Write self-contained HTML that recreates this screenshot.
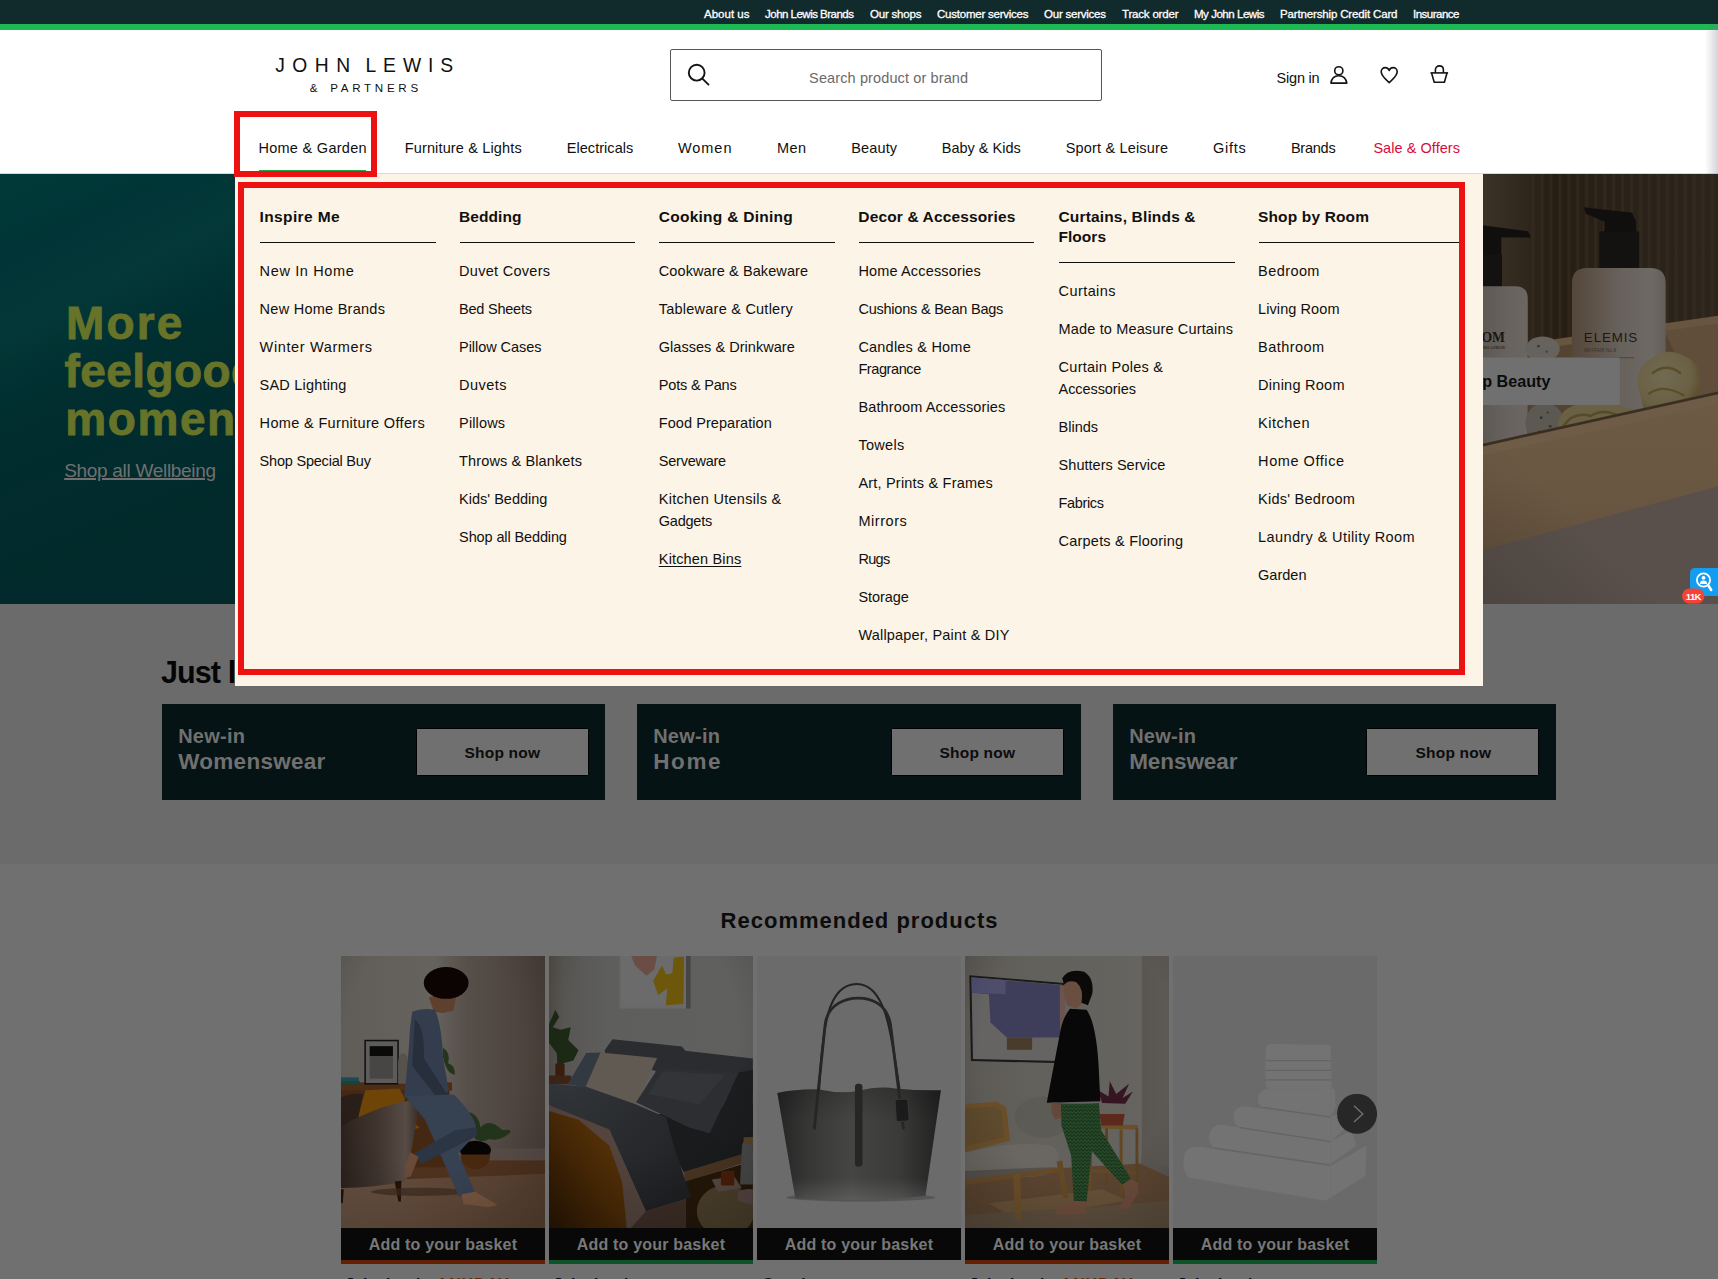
<!DOCTYPE html>
<html lang="en">
<head>
<meta charset="utf-8">
<title>John Lewis &amp; Partners | Homeware, Fashion, Electricals &amp; More</title>
<style>
html,body{margin:0;padding:0}
body{width:1718px;height:1279px;overflow:hidden;position:relative;background:#707070;font-family:"Liberation Sans",sans-serif;color:#101010}
.abs,.t,.rule,svg{position:absolute}
.t{white-space:nowrap;display:block}
.rule{width:175.5px;height:1.5px;background:#101010}
#topbar{left:0;top:0;width:1718px;height:24px;background:#112b2c}
#greenbar{left:0;top:24px;width:1718px;height:6px;background:#1db954}
#header{left:0;top:30px;width:1718px;height:143px;background:#fff}
#hline{left:0;top:173px;width:1718px;height:1px;background:#d9d9d9}
#search{left:670px;top:49px;width:430px;height:50px;border:1px solid #555;border-radius:2px;background:#fff}
#hero{left:0;top:174px;width:1718px;height:430px;background:#022e2f;overflow:hidden}
#sec1{left:0;top:604px;width:1718px;height:260px;background:#6b6b6b}
#sec2{left:0;top:864px;width:1718px;height:415px;background:#707070}
#menu{left:235px;top:174px;width:1248px;height:512px;background:#fcf4e6}
.red{border:6px solid #ed1212;box-sizing:border-box}
.card{top:704px;width:443px;height:96px;background:#061314}
.btn{top:728px;width:170.6px;height:45.6px;background:#707070;border:1px solid #000;border-radius:1.5px}
.bar{top:1228px;width:204px;height:32px;background:#080808}
.stripe{top:1260px;width:204px;height:4px}
.pimg{top:956px;width:204px;height:272px;overflow:hidden}
</style>
</head>
<body>
<div class="abs" id="topbar"></div>
<div class="abs" id="greenbar"></div>
<div class="abs" id="header"></div>
<div class="abs" id="hline"></div>
<div class="abs" id="search"></div>
<div class="abs" style="left:1705px;top:24px;width:13px;height:150px;background:linear-gradient(90deg,rgba(110,115,130,0),rgba(110,115,130,.3))"></div>
<svg style="left:684px;top:61px" width="30" height="30" viewBox="0 0 30 30" fill="none" stroke="#141414" stroke-width="1.9" stroke-linecap="round"><circle cx="12.7" cy="11.7" r="7.9"/><path d="M18.4 17.6 L24.5 23.6"/></svg>
<svg style="left:1328px;top:62px" width="24" height="24" viewBox="0 0 24 24" fill="none" stroke="#141414" stroke-width="1.6" stroke-linejoin="round"><circle cx="10.8" cy="8.8" r="4.1"/><path d="M2.9 21.1 C3.6 16.2 6.8 13.7 10.8 13.7 C14.8 13.7 18 16.2 18.8 21.1 Z"/></svg>
<svg style="left:1378px;top:62px" width="24" height="24" viewBox="0 0 24 24" fill="none" stroke="#141414" stroke-width="1.6" stroke-linejoin="round"><path d="M11.2 20.6 C8.6 18.2 3.2 14 3.2 9.8 C3.2 7.2 5.1 5.6 7.2 5.6 C8.9 5.6 10.4 6.6 11.2 8.4 C12 6.6 13.5 5.6 15.2 5.6 C17.3 5.6 19.2 7.2 19.2 9.8 C19.2 14 13.8 18.2 11.2 20.6 Z"/></svg>
<svg style="left:1428px;top:62px" width="24" height="24" viewBox="0 0 24 24" fill="none" stroke="#141414" stroke-width="1.6" stroke-linejoin="round"><path d="M7.4 10.9 V8 C7.4 5.6 9.1 3.9 11.4 3.9 C13.7 3.9 15.4 5.6 15.4 8 V10.9"/><path d="M2.5 10.9 H20.1"/><path d="M3.6 11 L6.2 20.3 H16.4 L19 11"/></svg>

<div class="abs" id="hero">
<div class="abs" style="left:0;top:0;width:1483px;height:430px;background:linear-gradient(158deg,#003a38 0%,#003436 9%,#012d2e 26%,#02292b 44%,#02272a 100%)"></div>
<div class="abs" style="left:0;top:0;width:600px;height:430px;background:linear-gradient(153deg,rgba(20,90,80,0) 12%,rgba(20,90,80,.16) 22%,rgba(20,90,80,0) 33%)"></div>
<svg style="left:1460px;top:-4px" width="258" height="440" viewBox="0 0 750 1279">
<defs>
<linearGradient id="hw" x1="0" x2="1" y1="0" y2="0"><stop offset="0" stop-color="#3c3228"/><stop offset=".18" stop-color="#30271d"/><stop offset=".3" stop-color="#261d13"/><stop offset=".6" stop-color="#2a2218"/><stop offset="1" stop-color="#2d251b"/></linearGradient>
<linearGradient id="hb1" x1="0" x2="1"><stop offset="0" stop-color="#54473a"/><stop offset=".22" stop-color="#5d5248"/><stop offset=".5" stop-color="#67615b"/><stop offset=".85" stop-color="#6d6965"/><stop offset="1" stop-color="#625d58"/></linearGradient>
<linearGradient id="hb2" x1="0" x2="1"><stop offset="0" stop-color="#5e5852"/><stop offset=".6" stop-color="#68635f"/><stop offset="1" stop-color="#6c6661"/></linearGradient>
<linearGradient id="hwood" x1="0" x2="0" y1="0" y2="1"><stop offset="0" stop-color="#6c5a45"/><stop offset=".5" stop-color="#6a5843"/><stop offset="1" stop-color="#64523e"/></linearGradient>
<pattern id="ribs" width="26" height="10" patternUnits="userSpaceOnUse"><rect x="0" width="9" height="10" fill="#362d22" opacity=".55"/></pattern>
<radialGradient id="spg" cx=".4" cy=".35" r=".7"><stop offset="0" stop-color="#716b53"/><stop offset=".65" stop-color="#6a6044"/><stop offset="1" stop-color="#584826"/></radialGradient>
</defs>
<rect x="60" y="12" width="700" height="1260" fill="url(#hw)"/>
<rect x="200" y="12" width="560" height="520" fill="url(#ribs)"/>
<!-- floor / surface under tray -->
<polygon points="60,1095 750,915 750,1279 60,1279" fill="#59504b"/>
<!-- tray back + inside -->
<polygon points="198,515 750,436 750,700 198,800" fill="#554331"/>
<polygon points="590,462 750,440 750,650 690,660" fill="#614e3a"/>
<polygon points="198,503 750,424 750,446 198,525" fill="#67553f"/>
<!-- left bottle -->
<polygon points="60,160 198,178 206,196 120,196 120,250 60,250" fill="#100f0e"/>
<rect x="60" y="245" width="62" height="100" fill="#131211"/>
<path d="M60 338 H165 Q197 340 197 375 V810 H60 Z" fill="url(#hb2)"/>
<text x="131" y="500" text-anchor="end" font-family="Liberation Serif, serif" font-weight="700" font-size="40" fill="#1c1612">NEOM</text>
<text x="131" y="520" text-anchor="end" font-family="Liberation Sans, sans-serif" font-weight="700" font-size="8.5" letter-spacing="1" fill="#2a241f">WELLBEING LONDON</text>
<!-- pumice -->
<ellipse cx="240" cy="520" rx="50" ry="36" fill="#66625d"/>
<ellipse cx="246" cy="735" rx="56" ry="58" fill="#5c5852"/>
<!-- elemis bottle -->
<polygon points="360,108 500,124 512,150 512,182 420,182 420,150 366,127" fill="#100f0e"/>
<rect x="405" y="178" width="116" height="130" rx="6" fill="#131211"/>
<path d="M325 330 Q325 285 370 285 H553 Q598 285 598 330 V720 H325 Z" fill="url(#hb1)"/>
<text x="360" y="501" font-family="Liberation Sans, sans-serif" font-size="39" letter-spacing="2.5" fill="#1e1812">ELEMIS</text>
<text x="361" y="530" font-family="Liberation Sans, sans-serif" font-size="13" letter-spacing=".5" fill="#382f27">MAYFAIR No.9</text>
<rect x="361" y="545" width="145" height="2" fill="#40372f"/>
<!-- sponges -->
<path d="M285 740 Q290 690 350 680 Q420 660 480 690 Q540 700 530 760 L300 790 Z" fill="#6a6044"/>
<path d="M300 745 Q330 700 380 715 Q420 690 470 720" fill="none" stroke="#574a2a" stroke-width="7"/>
<path d="M520 640 Q505 570 560 545 Q600 515 650 540 Q705 560 698 630 Q700 700 640 722 Q570 735 535 700 Z" fill="url(#spg)"/>
<path d="M560 590 Q600 560 640 590 M550 650 Q590 620 650 655 M585 690 Q620 670 660 690" fill="none" stroke="#5a4d2c" stroke-width="7" stroke-linecap="round"/>
<circle cx="228" cy="512" r="4" fill="#3d3934"/><circle cx="252" cy="528" r="3" fill="#3d3934"/><circle cx="236" cy="720" r="4" fill="#36322d"/><circle cx="262" cy="745" r="4" fill="#36322d"/><circle cx="230" cy="760" r="3" fill="#36322d"/><circle cx="255" cy="705" r="3" fill="#36322d"/>
<!-- tray front -->
<polygon points="60,797 750,644 750,654 60,807" fill="#3a2e20"/>
<polygon points="60,805 750,652 750,680 60,833" fill="#6e5c47"/>
<polygon points="60,831.5 750,678.5 750,919 60,1106" fill="url(#hwood)"/>
<linearGradient id="vig" x1="0" x2="1" y1="1" y2="0"><stop offset="0" stop-color="#140e08" stop-opacity=".18"/><stop offset=".4" stop-color="#140e08" stop-opacity="0"/></linearGradient><rect x="60" y="600" width="700" height="680" fill="url(#vig)"/>
<!-- button -->
<rect x="-80" y="545" width="545" height="138" rx="5" fill="#707070"/>
<text x="263" y="631" text-anchor="end" font-family="Liberation Sans, sans-serif" font-weight="700" font-size="47" fill="#0a0c0e">Shop Beauty</text>
</svg>

</div>
<div class="abs" id="sec1"></div>
<div class="abs" id="sec2"></div>
<div class="abs card" style="left:162px"></div><div class="abs btn" style="left:416.4px"></div>
<div class="abs card" style="left:637px;width:444px"></div><div class="abs btn" style="left:891.4px"></div>
<div class="abs card" style="left:1113px"></div><div class="abs btn" style="left:1366.4px"></div>
<svg style="left:335px;top:950px" width="220" height="329" viewBox="0 0 855 1279">
<defs>
<clipPath id="c1"><rect x="23.3" y="23.3" width="792.8" height="1057"/></clipPath>
<linearGradient id="p1w" x1="0" x2="1"><stop offset="0" stop-color="#605d58"/><stop offset=".45" stop-color="#66635e"/><stop offset=".62" stop-color="#564e49"/><stop offset="1" stop-color="#4a3f39"/></linearGradient>
<linearGradient id="p1r" x1="0" x2="1" y1="0" y2="0"><stop offset="0" stop-color="#6a5444"/><stop offset=".5" stop-color="#5e4737"/><stop offset="1" stop-color="#594232"/></linearGradient>
<linearGradient id="p1c" x1="0" x2="1"><stop offset="0" stop-color="#2e221d"/><stop offset=".5" stop-color="#40352f"/><stop offset=".85" stop-color="#564b45"/><stop offset="1" stop-color="#3a302b"/></linearGradient>
<radialGradient id="p1v" cx=".45" cy=".35" r=".8"><stop offset=".55" stop-color="#000" stop-opacity="0"/><stop offset="1" stop-color="#000" stop-opacity=".2"/></radialGradient>
</defs>
<g clip-path="url(#c1)">
<rect x="20" y="20" width="800" height="1065" fill="url(#p1w)"/>
<!-- skirting + floor -->
<rect x="440" y="772" width="380" height="50" fill="#584c46"/>
<rect x="20" y="818" width="800" height="270" fill="#4e321e"/>
<polygon points="20,900 820,870 820,1085 20,1085" fill="url(#p1r)"/>
<!-- sideboard -->
<rect x="20" y="515" width="435" height="32" fill="#4d2d16"/>
<rect x="20" y="545" width="425" height="300" fill="#452812"/>
<!-- books, frame, vase -->
<rect x="20" y="495" width="72" height="14" fill="#1e4a55"/><rect x="20" y="509" width="76" height="14" fill="#1a4434"/>
<rect x="114" y="349" width="134" height="174" fill="#101010"/><rect x="120" y="355" width="122" height="162" fill="#5e5c5a"/>
<rect x="135" y="374" width="90" height="126" fill="#484644"/><rect x="135" y="374" width="90" height="38" fill="#0a0a0a"/>
<path d="M245 520 V440 Q245 405 265 400 Q285 405 285 440 V520 Z" fill="#57524c"/>
<!-- plant behind -->
<path d="M420 380 Q450 400 440 440 Q470 450 465 485 Q440 480 430 450 Q415 420 420 380 Z" fill="#25351c"/>
<!-- pot plant right -->
<path d="M520 630 Q560 640 565 690 Q600 650 650 700 Q690 695 680 710 Q640 745 600 735 Q570 750 545 735 Q530 690 520 630 Z" fill="#22341b"/>
<ellipse cx="546" cy="778" rx="60" ry="36" fill="#060504"/>
<path d="M488 795 H604 Q600 850 546 852 Q492 850 488 795 Z" fill="#48290f"/>
<!-- throw -->
<polygon points="85,660 118,545 250,538 272,578 255,640 330,690 300,700 200,640" fill="#6e4506"/>
<!-- chair -->
<path d="M20 575 Q60 555 110 560 L90 650 Q200 600 290 585 Q330 600 318 660 L275 900 Q150 925 20 925 Z" fill="url(#p1c)"/>
<path d="M20 575 Q60 555 110 560 L90 650 Q60 660 20 690 Z" fill="#2a1e19"/>
<polygon points="232,900 258,897 256,978 246,978" fill="#241207"/>
<polygon points="20,930 34,930 30,985 24,985" fill="#241207"/>
<ellipse cx="330" cy="940" rx="190" ry="16" fill="#3a2a1f" opacity=".7"/>
<!-- woman -->
<path d="M365 185 L405 170 L470 185 L460 235 L420 245 L385 240 Z" fill="#5f3f2d"/>
<ellipse cx="432" cy="128" rx="87" ry="62" fill="#0c0403"/>
<path d="M300 240 Q335 225 388 232 Q415 290 420 420 L442 545 L420 572 L268 572 Q285 430 292 300 Z" fill="#333d4d"/>
<path d="M310 270 Q350 300 345 420 L435 560 L405 585 L300 450 Z" fill="#272f3c"/>
<!-- legs -->
<path d="M272 568 L462 562 Q560 660 548 715 L478 790 L545 945 L482 958 L425 830 L350 660 Z" fill="#364152"/>
<path d="M548 690 L552 722 L335 832 L308 790 L470 700 Z" fill="#2c3544"/>
<path d="M292 785 L325 805 L295 880 L270 888 L275 830 Z" fill="#6a4a38"/>
<path d="M492 950 L545 940 L632 990 L600 1000 L500 988 Z" fill="#75553f"/>
<rect x="20" y="20" width="800" height="1065" fill="url(#p1v)"/>
</g>
</svg>

<svg style="left:545px;top:950px" width="220" height="329" viewBox="0 0 855 1279">
<defs>
<clipPath id="c2"><rect x="15.5" y="23.3" width="792.8" height="1057"/></clipPath>
<linearGradient id="p2w" x1="0" x2="1"><stop offset="0" stop-color="#4f4b46"/><stop offset=".08" stop-color="#585653"/><stop offset=".3" stop-color="#5e5e5d"/><stop offset="1" stop-color="#60605f"/></linearGradient>
<linearGradient id="p2m" x1="1" x2="0" y1="0" y2="1"><stop offset="0" stop-color="#5e3607"/><stop offset=".5" stop-color="#4a2a06"/><stop offset="1" stop-color="#2a1603"/></linearGradient>
<linearGradient id="p2d" x1="0" x2="1" y1="0" y2="1"><stop offset="0" stop-color="#33363a"/><stop offset=".6" stop-color="#26282b"/><stop offset="1" stop-color="#1c1d1f"/></linearGradient>
<radialGradient id="p2v" cx=".5" cy=".3" r=".85"><stop offset=".5" stop-color="#000" stop-opacity="0"/><stop offset="1" stop-color="#000" stop-opacity=".25"/></radialGradient>
</defs>
<g clip-path="url(#c2)">
<rect x="10" y="20" width="800" height="1065" fill="url(#p2w)"/>
<!-- frame -->
<rect x="290" y="20" width="276" height="208" fill="#696969"/><rect x="548" y="20" width="18" height="208" fill="#454545"/>
<rect x="298" y="20" width="250" height="196" fill="#6b6b6b"/>
<path d="M335 23 H435 L425 75 L395 100 L350 60 Z" fill="#6a4d45"/>
<path d="M500 30 L540 25 L538 210 L470 215 L475 150 L440 175 L420 120 L455 60 L470 95 L495 90 Z" fill="#6c570b"/>
<!-- plant + table -->
<path d="M40 232 L55 260 L30 300 L60 310 L100 300 L90 350 L130 390 L110 430 L70 440 L65 470 L50 470 L45 400 L15 360 L15 290 Z" fill="#1b2915"/>
<rect x="40" y="440" width="36" height="52" rx="6" fill="#3a1d0c"/>
<rect x="10" y="488" width="92" height="34" fill="#3d2416"/>
<!-- back pillows -->
<polygon points="232,390 262,347 532,375 545,392 808,422 808,560 430,470 235,410" fill="#2a2c2f"/>
<polygon points="88,522 160,400 216,398 165,535" fill="#333941"/>
<!-- fitted sheet / mattress side -->
<polygon points="420,640 808,600 808,790 540,865" fill="#1a1b1d"/>
<polygon points="540,862 770,792 770,828 545,902" fill="#4a3522"/>
<polygon points="545,900 808,820 808,1085 545,1085" fill="#241708"/>
<!-- pillows -->
<polygon points="158,532 216,398 436,420 352,602" fill="#615a53"/>
<polygon points="640,712 752,476 808,466 808,715 705,752" fill="#1c1d1f"/>
<polygon points="354,592 442,455 752,476 640,712 560,690" fill="#2c2e31"/>
<polygon points="400,560 460,470 700,485 600,600" fill="#34373a" opacity=".7"/>
<!-- duvet -->
<polygon points="10,518 160,532 352,600 470,650 500,760 568,962 392,1018 250,700 10,605" fill="url(#p2d)"/>
<!-- blush under-layer -->
<polygon points="10,600 250,698 392,1016 548,968 545,1085 315,1085 300,900 250,762 130,662 10,626" fill="#54443d"/>
<polygon points="392,1016 548,968 545,1085 330,1085" fill="#3d2d26"/>
<!-- mustard throw -->
<polygon points="10,624 130,660 250,760 300,900 318,1085 10,1085" fill="url(#p2m)"/>
<!-- pouffe + objects -->
<ellipse cx="702" cy="1015" rx="112" ry="100" fill="#4d412c"/>
<polygon points="648,892 735,880 765,925 672,940" fill="#5a4a44"/>
<rect x="684" y="858" width="52" height="58" rx="6" fill="#4a1f08"/>
<path d="M765 770 Q765 745 780 740 V728 H808 V912 H758 Z" fill="#4a4a4a"/><rect x="772" y="728" width="36" height="26" fill="#5a422a"/>
<path d="M748 945 Q770 925 808 930 V990 Q775 985 750 975 Z" fill="#5a4845"/>
<rect x="10" y="20" width="800" height="1065" fill="url(#p2v)"/>
</g>
</svg>

<svg style="left:750px;top:950px" width="220" height="329" viewBox="0 0 855 1279">
<defs>
<clipPath id="c3"><rect x="27.2" y="23.3" width="792.8" height="1057"/></clipPath>
<linearGradient id="p3b" x1="0" x2="1"><stop offset="0" stop-color="#242424"/><stop offset=".18" stop-color="#363635"/><stop offset=".45" stop-color="#454543"/><stop offset=".75" stop-color="#3a3a39"/><stop offset="1" stop-color="#202020"/></linearGradient>
<linearGradient id="p3s" x1="0" x2="0" y1="0" y2="1"><stop offset="0" stop-color="#000" stop-opacity=".18"/><stop offset=".3" stop-color="#000" stop-opacity="0"/><stop offset=".8" stop-color="#fff" stop-opacity="0"/><stop offset="1" stop-color="#fff" stop-opacity=".12"/></linearGradient>
</defs>
<g clip-path="url(#c3)">
<rect x="20" y="20" width="805" height="1065" fill="#6b6b6b"/>
<ellipse cx="430" cy="962" rx="290" ry="16" fill="#555555"/>
<path d="M268 548 C282 300 300 132 415 132 C522 132 548 300 582 548" fill="none" stroke="#222222" stroke-width="8"/>
<path d="M106 556 Q180 540 270 542 Q350 560 420 548 Q500 528 565 538 Q660 548 742 545 L682 955 Q430 985 176 965 Z" fill="url(#p3b)"/>
<path d="M106 556 Q180 540 270 542 Q350 560 420 548 Q500 528 565 538 Q660 548 742 545 L682 955 Q430 985 176 965 Z" fill="url(#p3s)"/>
<path d="M250 692 L292 290 C302 205 380 187 420 187 C466 187 532 205 546 290 L596 692" fill="none" stroke="#262626" stroke-width="11" stroke-linecap="round"/>
<rect x="408" y="520" width="29" height="322" rx="12" fill="#262626"/>
<rect x="566" y="580" width="50" height="86" rx="8" fill="#1b1b1b" stroke="#383838" stroke-width="4" transform="rotate(-4 590 620)"/>
</g>
</svg>

<svg style="left:958px;top:950px" width="220" height="329" viewBox="0 0 855 1279">
<defs>
<clipPath id="c4"><rect x="27.2" y="23.3" width="792.8" height="1057"/></clipPath>
<linearGradient id="p4w" x1="0" x2="1"><stop offset="0" stop-color="#5c5955"/><stop offset=".3" stop-color="#62605b"/><stop offset=".86" stop-color="#666460"/><stop offset=".865" stop-color="#595652"/><stop offset="1" stop-color="#5d5a56"/></linearGradient>
<pattern id="leo" width="14" height="14" patternUnits="userSpaceOnUse"><rect width="14" height="14" fill="#234526"/><circle cx="3" cy="4" r="2.6" fill="#0e1f10"/><circle cx="10" cy="10" r="2.8" fill="#0e1f10"/><circle cx="10" cy="2" r="1.6" fill="#3f6a3a"/><circle cx="3" cy="11" r="1.6" fill="#3f6a3a"/></pattern>
<radialGradient id="p4v" cx=".55" cy=".35" r=".85"><stop offset=".55" stop-color="#000" stop-opacity="0"/><stop offset="1" stop-color="#000" stop-opacity=".22"/></radialGradient>
</defs>
<g clip-path="url(#c4)">
<rect x="20" y="20" width="805" height="1065" fill="url(#p4w)"/>
<!-- soft shadow on wall -->
<ellipse cx="330" cy="650" rx="110" ry="80" fill="#4e4a46" opacity=".22"/>
<!-- floor -->
<polygon points="20,870 712,830 820,880 820,1085 20,1085" fill="#5a4430"/>
<polygon points="712,800 820,845 820,882 712,832" fill="#5a5652"/>
<polygon points="120,985 560,930 660,975 220,1045" fill="#6a553c" opacity=".7"/>
<polygon points="20,1030 560,995 820,975 820,1085 20,1085" fill="#5a4c3c"/>
<!-- art -->
<polygon points="44,98 412,128 412,440 50,432" fill="#1a1a1a"/>
<polygon points="52,106 404,135 404,432 58,424" fill="#666462"/>
<polygon points="54,108 400,136 400,340 190,340 126,282 120,172 54,166" fill="#3f3e5a"/>
<polygon points="54,108 185,118 185,172 54,166" fill="#4e4d6c"/>
<rect x="190" y="340" width="98" height="48" fill="#4a3c2c"/>
<polygon points="396,136 416,138 416,340 396,340" fill="#6a5450"/>
<!-- chair -->
<polygon points="20,600 150,590 188,612 202,742 20,786" fill="#6a4e28"/>
<polygon points="20,618 140,608 168,624 180,728 20,765" fill="#5e4a2c"/>
<path d="M20 790 Q200 740 360 760 Q400 775 390 830 Q380 870 300 880 L20 900 Z" fill="#6a6661"/>
<path d="M20 860 Q200 850 380 845 Q360 875 300 880 L20 900 Z" fill="#55504b"/>
<polygon points="20,895 395,845 398,862 20,915" fill="#664a26"/>
<polygon points="214,870 242,868 246,1050 222,1050" fill="#6a4e28"/>
<polygon points="383,822 405,818 428,962 410,966" fill="#624824"/>
<!-- table + plant -->
<polygon points="520,676 700,680 700,698 520,694" fill="#6a4f2a"/>
<rect x="508" y="694" width="12" height="240" fill="#624824"/><rect x="572" y="694" width="11" height="215" fill="#5a4222"/><rect x="628" y="698" width="12" height="255" fill="#624824"/><rect x="690" y="694" width="11" height="212" fill="#5a4222"/>
<polygon points="520,850 692,858 692,872 520,866" fill="#624824"/>
<path d="M545 592 H652 L648 640 H550 Z" fill="#66615c"/><path d="M550 638 H648 L640 682 H558 Z" fill="#5c2a1c"/>
<path d="M560 595 L545 545 L585 570 L590 510 L615 560 L665 520 L640 575 L680 550 L650 598 Z" fill="#361522"/>
<!-- woman -->
<path d="M412 130 Q440 105 480 125 L485 205 L460 228 L425 215 Q408 180 412 130 Z" fill="#6a4e40"/>
<path d="M405 110 Q430 70 490 85 Q530 110 522 170 L505 215 L480 205 Q490 150 460 125 Q430 115 412 135 Z" fill="#0c0a09"/>
<path d="M435 228 L500 232 Q540 290 548 480 L553 588 L345 594 Q368 470 395 330 Q405 265 435 228 Z" fill="#080808"/>
<path d="M365 592 L405 596 L400 650 L378 660 L362 630 Z" fill="#64483a"/>
<path d="M500 598 L548 596 L556 700 L672 888 L640 915 L520 782 Z" fill="url(#leo)"/>
<path d="M400 598 L502 598 L522 762 L500 978 L450 978 L440 800 L402 682 Z" fill="url(#leo)"/>
<path d="M376 1012 L448 975 L500 978 L497 1024 L388 1030 Z" fill="#6a4a3a"/>
<path d="M640 912 L672 890 L700 905 L702 942 L662 1008 L626 1004 L650 960 Z" fill="#6a4a3a"/>
<rect x="20" y="20" width="805" height="1065" fill="url(#p4v)"/>
</g>
</svg>

<svg style="left:1166px;top:950px" width="220" height="329" viewBox="0 0 855 1279">
<defs>
<clipPath id="c5"><rect x="27.2" y="23.3" width="792.8" height="1057"/></clipPath>
<linearGradient id="p5t" x1="0" x2="1"><stop offset="0" stop-color="#747474"/><stop offset=".5" stop-color="#767676"/><stop offset="1" stop-color="#767676"/></linearGradient>
</defs>
<g clip-path="url(#c5)">
<rect x="20" y="20" width="805" height="1065" fill="#6a6a6a"/>
<!-- towels bottom to top -->
<path d="M70 800 Q80 760 130 765 L640 840 L780 760 L775 880 L620 975 L90 885 Q60 860 70 800 Z" fill="#737373"/>
<path d="M168 715 Q180 675 225 680 L640 745 L720 700 L740 760 L635 835 L190 770 Q160 750 168 715 Z" fill="#737373"/>
<path d="M262 640 Q272 605 310 608 L640 650 L690 625 L700 690 L640 745 L285 690 Q258 675 262 640 Z" fill="#737373"/>
<path d="M358 570 Q366 540 395 542 L655 540 L660 610 L640 650 L375 610 Q352 598 358 570 Z" fill="#737373"/>
<path d="M388 380 Q392 365 412 365 L640 368 L645 540 L395 542 Q382 530 388 380 Z" fill="#737373"/>
<path d="M390 430 H642 M388 468 H642 M386 505 H644" stroke="#646464" stroke-width="5" fill="none"/>
<path d="M380 612 L640 650 M285 690 L640 745 M190 770 L635 835" stroke="#646464" stroke-width="5" fill="none"/>
<path d="M640 368 V975" stroke="#727272" stroke-width="3" fill="none" opacity=".6"/>
</g>
</svg>
<svg style="left:1337px;top:1094px" width="40" height="40" viewBox="0 0 40 40"><circle cx="20.05" cy="19.8" r="20" fill="#272727"/><path d="M17 11.8 L25.8 20 L17 28.1" fill="none" stroke="#707070" stroke-width="1.4"/></svg>

<div class="abs bar" style="left:341px"></div><div class="abs stripe" style="left:341px;background:#642003"></div>
<div class="abs bar" style="left:549px"></div><div class="abs stripe" style="left:549px;background:#0d5228"></div>
<div class="abs bar" style="left:757px"></div>
<div class="abs bar" style="left:965px"></div><div class="abs stripe" style="left:965px;background:#642003"></div>
<div class="abs bar" style="left:1173px"></div><div class="abs stripe" style="left:1173px;background:#0d5228"></div>

<span class="t" style="left:65.9px;top:291.0px;font-size:46px;line-height:64px;font-weight:700;color:#677329;letter-spacing:2.2px;-webkit-text-stroke:0.9px #677329;">More</span>
<span class="t" style="left:64.6px;top:339.0px;font-size:46px;line-height:64px;font-weight:700;color:#677329;letter-spacing:0.4px;-webkit-text-stroke:0.9px #677329;">feelgood</span>
<span class="t" style="left:65.2px;top:387.0px;font-size:46px;line-height:64px;font-weight:700;color:#677329;letter-spacing:1.6px;-webkit-text-stroke:0.9px #677329;">moments</span>
<span class="t" style="left:64.2px;top:457.0px;font-size:19px;line-height:27px;color:#707070;letter-spacing:-0.30px;text-decoration:underline;text-underline-offset:1.2px;text-decoration-thickness:1.7px;">Shop all Wellbeing</span>
<span class="t" style="left:161.0px;top:650.5px;font-size:30.5px;line-height:43px;font-weight:700;color:#050505;letter-spacing:-0.9px;">Just landed</span>
<div class="abs" id="menu"></div>
<div class="rule" style="left:260.0px;top:241.6px;width:175.5px"></div>
<div class="rule" style="left:459.5px;top:241.6px;width:175.5px"></div>
<div class="rule" style="left:659.2px;top:241.6px;width:175.5px"></div>
<div class="rule" style="left:858.8px;top:241.6px;width:175.5px"></div>
<div class="rule" style="left:1059.0px;top:261.6px;width:175.5px"></div>
<div class="rule" style="left:1258.5px;top:241.6px;width:200px"></div>
<span class="t" style="left:704.0px;top:6.0px;font-size:11.5px;line-height:16px;color:#fff;letter-spacing:0.01px;-webkit-text-stroke:0.3px #fff;">About us</span>
<span class="t" style="left:765.0px;top:6.0px;font-size:11.5px;line-height:16px;color:#fff;letter-spacing:-0.51px;-webkit-text-stroke:0.3px #fff;">John Lewis Brands</span>
<span class="t" style="left:870.0px;top:6.0px;font-size:11.5px;line-height:16px;color:#fff;letter-spacing:-0.20px;-webkit-text-stroke:0.3px #fff;">Our shops</span>
<span class="t" style="left:937.0px;top:6.0px;font-size:11.5px;line-height:16px;color:#fff;letter-spacing:-0.23px;-webkit-text-stroke:0.3px #fff;">Customer services</span>
<span class="t" style="left:1044.0px;top:6.0px;font-size:11.5px;line-height:16px;color:#fff;letter-spacing:-0.23px;-webkit-text-stroke:0.3px #fff;">Our services</span>
<span class="t" style="left:1122.0px;top:6.0px;font-size:11.5px;line-height:16px;color:#fff;letter-spacing:-0.19px;-webkit-text-stroke:0.3px #fff;">Track order</span>
<span class="t" style="left:1194.0px;top:6.0px;font-size:11.5px;line-height:16px;color:#fff;letter-spacing:-0.46px;-webkit-text-stroke:0.3px #fff;">My John Lewis</span>
<span class="t" style="left:1280.0px;top:6.0px;font-size:11.5px;line-height:16px;color:#fff;letter-spacing:-0.15px;-webkit-text-stroke:0.3px #fff;">Partnership Credit Card</span>
<span class="t" style="left:1413.0px;top:6.0px;font-size:11.5px;line-height:16px;color:#fff;letter-spacing:-0.50px;-webkit-text-stroke:0.3px #fff;">Insurance</span>
<span class="t" style="left:1276.6px;top:68.0px;font-size:14.5px;line-height:20px;letter-spacing:-0.21px;">Sign in</span>
<span class="t" style="left:809.1px;top:68.0px;font-size:14.5px;line-height:20px;color:#6a6a6a;letter-spacing:0.12px;">Search product or brand</span>
<span class="t" style="left:275.2px;top:52.0px;font-size:19.3px;line-height:27px;letter-spacing:7.5px;">JOHN</span>
<span class="t" style="left:365.5px;top:52.0px;font-size:19.3px;line-height:27px;letter-spacing:6.9px;">LEWIS</span>
<span class="t" style="left:309.8px;top:80.0px;font-size:11.6px;line-height:16px;">&amp;</span>
<span class="t" style="left:330.2px;top:80.0px;font-size:11.6px;line-height:16px;letter-spacing:3.7px;">PARTNERS</span>
<span class="t" style="left:258.4px;top:138.0px;font-size:14.5px;line-height:20px;letter-spacing:0.29px;">Home &amp; Garden</span>
<span class="t" style="left:404.7px;top:138.0px;font-size:14.5px;line-height:20px;letter-spacing:0.15px;">Furniture &amp; Lights</span>
<span class="t" style="left:566.8px;top:138.0px;font-size:14.5px;line-height:20px;letter-spacing:0.04px;">Electricals</span>
<span class="t" style="left:677.9px;top:138.0px;font-size:14.5px;line-height:20px;letter-spacing:0.97px;">Women</span>
<span class="t" style="left:776.9px;top:138.0px;font-size:14.5px;line-height:20px;letter-spacing:0.43px;">Men</span>
<span class="t" style="left:851.2px;top:138.0px;font-size:14.5px;line-height:20px;letter-spacing:0.15px;">Beauty</span>
<span class="t" style="left:941.8px;top:138.0px;font-size:14.5px;line-height:20px;letter-spacing:-0.01px;">Baby &amp; Kids</span>
<span class="t" style="left:1065.7px;top:138.0px;font-size:14.5px;line-height:20px;letter-spacing:0.17px;">Sport &amp; Leisure</span>
<span class="t" style="left:1213.1px;top:138.0px;font-size:14.5px;line-height:20px;letter-spacing:0.72px;">Gifts</span>
<span class="t" style="left:1290.9px;top:138.0px;font-size:14.5px;line-height:20px;letter-spacing:-0.23px;">Brands</span>
<span class="t" style="left:1373.4px;top:138.0px;font-size:14.5px;line-height:20px;color:#dc0a3c;letter-spacing:0.05px;">Sale &amp; Offers</span>
<span class="t" style="left:259.5px;top:205.5px;font-size:15.5px;line-height:22px;font-weight:700;letter-spacing:0.39px;">Inspire Me</span>
<span class="t" style="left:259.6px;top:261.0px;font-size:14.5px;line-height:20px;letter-spacing:0.63px;">New In Home</span>
<span class="t" style="left:259.6px;top:299.0px;font-size:14.5px;line-height:20px;letter-spacing:0.26px;">New Home Brands</span>
<span class="t" style="left:259.6px;top:337.0px;font-size:14.5px;line-height:20px;letter-spacing:0.63px;">Winter Warmers</span>
<span class="t" style="left:259.6px;top:375.0px;font-size:14.5px;line-height:20px;letter-spacing:0.20px;">SAD Lighting</span>
<span class="t" style="left:259.6px;top:413.0px;font-size:14.5px;line-height:20px;letter-spacing:0.34px;">Home &amp; Furniture Offers</span>
<span class="t" style="left:259.6px;top:451.0px;font-size:14.5px;line-height:20px;letter-spacing:-0.21px;">Shop Special Buy</span>
<span class="t" style="left:459.0px;top:205.5px;font-size:15.5px;line-height:22px;font-weight:700;letter-spacing:0.09px;">Bedding</span>
<span class="t" style="left:459.1px;top:261.0px;font-size:14.5px;line-height:20px;letter-spacing:0.28px;">Duvet Covers</span>
<span class="t" style="left:459.1px;top:299.0px;font-size:14.5px;line-height:20px;letter-spacing:-0.23px;">Bed Sheets</span>
<span class="t" style="left:459.1px;top:337.0px;font-size:14.5px;line-height:20px;letter-spacing:-0.06px;">Pillow Cases</span>
<span class="t" style="left:459.1px;top:375.0px;font-size:14.5px;line-height:20px;letter-spacing:0.45px;">Duvets</span>
<span class="t" style="left:459.1px;top:413.0px;font-size:14.5px;line-height:20px;letter-spacing:0.13px;">Pillows</span>
<span class="t" style="left:459.1px;top:451.0px;font-size:14.5px;line-height:20px;letter-spacing:0.12px;">Throws &amp; Blankets</span>
<span class="t" style="left:459.1px;top:489.0px;font-size:14.5px;line-height:20px;letter-spacing:0.01px;">Kids' Bedding</span>
<span class="t" style="left:459.1px;top:527.0px;font-size:14.5px;line-height:20px;letter-spacing:-0.12px;">Shop all Bedding</span>
<span class="t" style="left:658.7px;top:205.5px;font-size:15.5px;line-height:22px;font-weight:700;letter-spacing:0.27px;">Cooking &amp; Dining</span>
<span class="t" style="left:658.8px;top:261.0px;font-size:14.5px;line-height:20px;letter-spacing:0.10px;">Cookware &amp; Bakeware</span>
<span class="t" style="left:658.8px;top:299.0px;font-size:14.5px;line-height:20px;letter-spacing:0.23px;">Tableware &amp; Cutlery</span>
<span class="t" style="left:658.8px;top:337.0px;font-size:14.5px;line-height:20px;letter-spacing:0.03px;">Glasses &amp; Drinkware</span>
<span class="t" style="left:658.8px;top:375.0px;font-size:14.5px;line-height:20px;letter-spacing:-0.19px;">Pots &amp; Pans</span>
<span class="t" style="left:658.8px;top:413.0px;font-size:14.5px;line-height:20px;letter-spacing:0.06px;">Food Preparation</span>
<span class="t" style="left:658.8px;top:451.0px;font-size:14.5px;line-height:20px;letter-spacing:-0.24px;">Serveware</span>
<span class="t" style="left:658.8px;top:489.0px;font-size:14.5px;line-height:20px;letter-spacing:0.28px;">Kitchen Utensils &amp;</span>
<span class="t" style="left:658.8px;top:511.0px;font-size:14.5px;line-height:20px;letter-spacing:-0.24px;">Gadgets</span>
<span class="t" style="left:658.8px;top:549.0px;font-size:14.5px;line-height:20px;letter-spacing:0.16px;text-decoration:underline;text-underline-offset:2px;">Kitchen Bins</span>
<span class="t" style="left:858.3px;top:205.5px;font-size:15.5px;line-height:22px;font-weight:700;letter-spacing:0.14px;">Decor &amp; Accessories</span>
<span class="t" style="left:858.4px;top:261.0px;font-size:14.5px;line-height:20px;letter-spacing:0.15px;">Home Accessories</span>
<span class="t" style="left:858.4px;top:299.0px;font-size:14.5px;line-height:20px;letter-spacing:-0.22px;">Cushions &amp; Bean Bags</span>
<span class="t" style="left:858.4px;top:337.0px;font-size:14.5px;line-height:20px;letter-spacing:0.21px;">Candles &amp; Home</span>
<span class="t" style="left:858.4px;top:359.0px;font-size:14.5px;line-height:20px;letter-spacing:-0.40px;">Fragrance</span>
<span class="t" style="left:858.4px;top:397.0px;font-size:14.5px;line-height:20px;letter-spacing:0.14px;">Bathroom Accessories</span>
<span class="t" style="left:858.4px;top:435.0px;font-size:14.5px;line-height:20px;letter-spacing:0.31px;">Towels</span>
<span class="t" style="left:858.4px;top:473.0px;font-size:14.5px;line-height:20px;letter-spacing:0.20px;">Art, Prints &amp; Frames</span>
<span class="t" style="left:858.4px;top:511.0px;font-size:14.5px;line-height:20px;letter-spacing:0.55px;">Mirrors</span>
<span class="t" style="left:858.4px;top:549.0px;font-size:14.5px;line-height:20px;letter-spacing:-0.66px;">Rugs</span>
<span class="t" style="left:858.4px;top:587.0px;font-size:14.5px;line-height:20px;letter-spacing:-0.07px;">Storage</span>
<span class="t" style="left:858.4px;top:625.0px;font-size:14.5px;line-height:20px;letter-spacing:0.19px;">Wallpaper, Paint &amp; DIY</span>
<span class="t" style="left:1058.5px;top:205.5px;font-size:15.5px;line-height:22px;font-weight:700;letter-spacing:0.16px;">Curtains, Blinds &amp;</span>
<span class="t" style="left:1058.5px;top:225.5px;font-size:15.5px;line-height:22px;font-weight:700;letter-spacing:0.03px;">Floors</span>
<span class="t" style="left:1058.6px;top:281.0px;font-size:14.5px;line-height:20px;letter-spacing:0.41px;">Curtains</span>
<span class="t" style="left:1058.6px;top:319.0px;font-size:14.5px;line-height:20px;letter-spacing:0.15px;">Made to Measure Curtains</span>
<span class="t" style="left:1058.6px;top:357.0px;font-size:14.5px;line-height:20px;letter-spacing:0.26px;">Curtain Poles &amp;</span>
<span class="t" style="left:1058.6px;top:379.0px;font-size:14.5px;line-height:20px;letter-spacing:-0.08px;">Accessories</span>
<span class="t" style="left:1058.6px;top:417.0px;font-size:14.5px;line-height:20px;letter-spacing:-0.02px;">Blinds</span>
<span class="t" style="left:1058.6px;top:455.0px;font-size:14.5px;line-height:20px;letter-spacing:0.03px;">Shutters Service</span>
<span class="t" style="left:1058.6px;top:493.0px;font-size:14.5px;line-height:20px;letter-spacing:-0.36px;">Fabrics</span>
<span class="t" style="left:1058.6px;top:531.0px;font-size:14.5px;line-height:20px;letter-spacing:0.21px;">Carpets &amp; Flooring</span>
<span class="t" style="left:1258.0px;top:205.5px;font-size:15.5px;line-height:22px;font-weight:700;letter-spacing:0.15px;">Shop by Room</span>
<span class="t" style="left:1258.1px;top:261.0px;font-size:14.5px;line-height:20px;letter-spacing:0.42px;">Bedroom</span>
<span class="t" style="left:1258.1px;top:299.0px;font-size:14.5px;line-height:20px;letter-spacing:0.08px;">Living Room</span>
<span class="t" style="left:1258.1px;top:337.0px;font-size:14.5px;line-height:20px;letter-spacing:0.43px;">Bathroom</span>
<span class="t" style="left:1258.1px;top:375.0px;font-size:14.5px;line-height:20px;letter-spacing:0.26px;">Dining Room</span>
<span class="t" style="left:1258.1px;top:413.0px;font-size:14.5px;line-height:20px;letter-spacing:0.50px;">Kitchen</span>
<span class="t" style="left:1258.1px;top:451.0px;font-size:14.5px;line-height:20px;letter-spacing:0.56px;">Home Office</span>
<span class="t" style="left:1258.1px;top:489.0px;font-size:14.5px;line-height:20px;letter-spacing:0.25px;">Kids' Bedroom</span>
<span class="t" style="left:1258.1px;top:527.0px;font-size:14.5px;line-height:20px;letter-spacing:0.39px;">Laundry &amp; Utility Room</span>
<span class="t" style="left:1258.1px;top:565.0px;font-size:14.5px;line-height:20px;">Garden</span>
<span class="t" style="left:178.2px;top:722.0px;font-size:20px;line-height:28px;font-weight:700;color:#707070;letter-spacing:0.23px;">New-in</span>
<span class="t" style="left:178.2px;top:746.0px;font-size:22.5px;line-height:31px;font-weight:700;color:#707070;letter-spacing:0.28px;">Womenswear</span>
<span class="t" style="left:464.5px;top:741.5px;font-size:15.5px;line-height:22px;font-weight:700;color:#0c0c0c;letter-spacing:0.21px;">Shop now</span>
<span class="t" style="left:653.2px;top:722.0px;font-size:20px;line-height:28px;font-weight:700;color:#707070;letter-spacing:0.23px;">New-in</span>
<span class="t" style="left:653.2px;top:746.0px;font-size:22.5px;line-height:31px;font-weight:700;color:#707070;letter-spacing:1.64px;">Home</span>
<span class="t" style="left:939.5px;top:741.5px;font-size:15.5px;line-height:22px;font-weight:700;color:#0c0c0c;letter-spacing:0.21px;">Shop now</span>
<span class="t" style="left:1129.2px;top:722.0px;font-size:20px;line-height:28px;font-weight:700;color:#707070;letter-spacing:0.23px;">New-in</span>
<span class="t" style="left:1129.2px;top:746.0px;font-size:22.5px;line-height:31px;font-weight:700;color:#707070;letter-spacing:-0.07px;">Menswear</span>
<span class="t" style="left:1415.5px;top:741.5px;font-size:15.5px;line-height:22px;font-weight:700;color:#0c0c0c;letter-spacing:0.21px;">Shop now</span>
<span class="t" style="left:720.6px;top:905.0px;font-size:22px;line-height:31px;font-weight:700;color:#0c0c0c;letter-spacing:1.00px;">Recommended products</span>
<span class="t" style="left:368.7px;top:1233.5px;font-size:16px;line-height:22px;font-weight:700;color:#787878;letter-spacing:0.20px;">Add to your basket</span>
<span class="t" style="left:576.7px;top:1233.5px;font-size:16px;line-height:22px;font-weight:700;color:#787878;letter-spacing:0.20px;">Add to your basket</span>
<span class="t" style="left:784.7px;top:1233.5px;font-size:16px;line-height:22px;font-weight:700;color:#787878;letter-spacing:0.20px;">Add to your basket</span>
<span class="t" style="left:992.7px;top:1233.5px;font-size:16px;line-height:22px;font-weight:700;color:#787878;letter-spacing:0.20px;">Add to your basket</span>
<span class="t" style="left:1200.7px;top:1233.5px;font-size:16px;line-height:22px;font-weight:700;color:#787878;letter-spacing:0.20px;">Add to your basket</span>
<span class="t" style="left:345.0px;top:1273.5px;font-size:16px;line-height:22px;font-weight:700;color:#090909;letter-spacing:-0.34px;">John Lewis</span>
<span class="t" style="left:436.6px;top:1273.5px;font-size:16px;line-height:22px;font-weight:700;color:#6a2203;letter-spacing:1.20px;">ANYDAY</span>
<span class="t" style="left:553.0px;top:1273.5px;font-size:16px;line-height:22px;font-weight:700;color:#090909;letter-spacing:-0.34px;">John Lewis</span>
<span class="t" style="left:762.0px;top:1273.5px;font-size:16px;line-height:22px;font-weight:700;color:#090909;">Coach</span>
<span class="t" style="left:969.0px;top:1273.5px;font-size:16px;line-height:22px;font-weight:700;color:#090909;letter-spacing:-0.34px;">John Lewis</span>
<span class="t" style="left:1060.6px;top:1273.5px;font-size:16px;line-height:22px;font-weight:700;color:#6a2203;letter-spacing:1.20px;">ANYDAY</span>
<span class="t" style="left:1177.0px;top:1273.5px;font-size:16px;line-height:22px;font-weight:700;color:#090909;letter-spacing:-0.34px;">John Lewis</span>
<div class="abs" style="left:259.3px;top:170px;width:106.4px;height:3px;background:#1fa64a"></div>
<div class="abs red" style="left:234px;top:111px;width:143px;height:66px"></div>
<div class="abs red" style="left:238px;top:182px;width:1227px;height:493px"></div>
<svg style="left:1678px;top:564px" width="40" height="44" viewBox="0 0 40 44">
<path d="M17.5 4 H40 V32 H12 V9.5 Q12 4 17.5 4 Z" fill="#139df0"/>
<circle cx="25.5" cy="16" r="6.6" fill="none" stroke="#fff" stroke-width="1.8"/>
<path d="M30 21 L33.2 26" stroke="#fff" stroke-width="2.6" stroke-linecap="round"/>
<circle cx="25.5" cy="13.8" r="1.9" fill="#fff"/>
<path d="M21.8 20 Q22 16.6 25.5 16.6 Q29 16.6 29.2 20 Z" fill="#fff"/>
<rect x="4" y="24.5" width="22.5" height="15" rx="7.5" fill="#f44336"/>
<text x="15.3" y="35.6" text-anchor="middle" font-family="Liberation Sans, sans-serif" font-weight="700" font-size="9.6" letter-spacing="-.7" fill="#fff">11K</text>
</svg>

</body>
</html>
